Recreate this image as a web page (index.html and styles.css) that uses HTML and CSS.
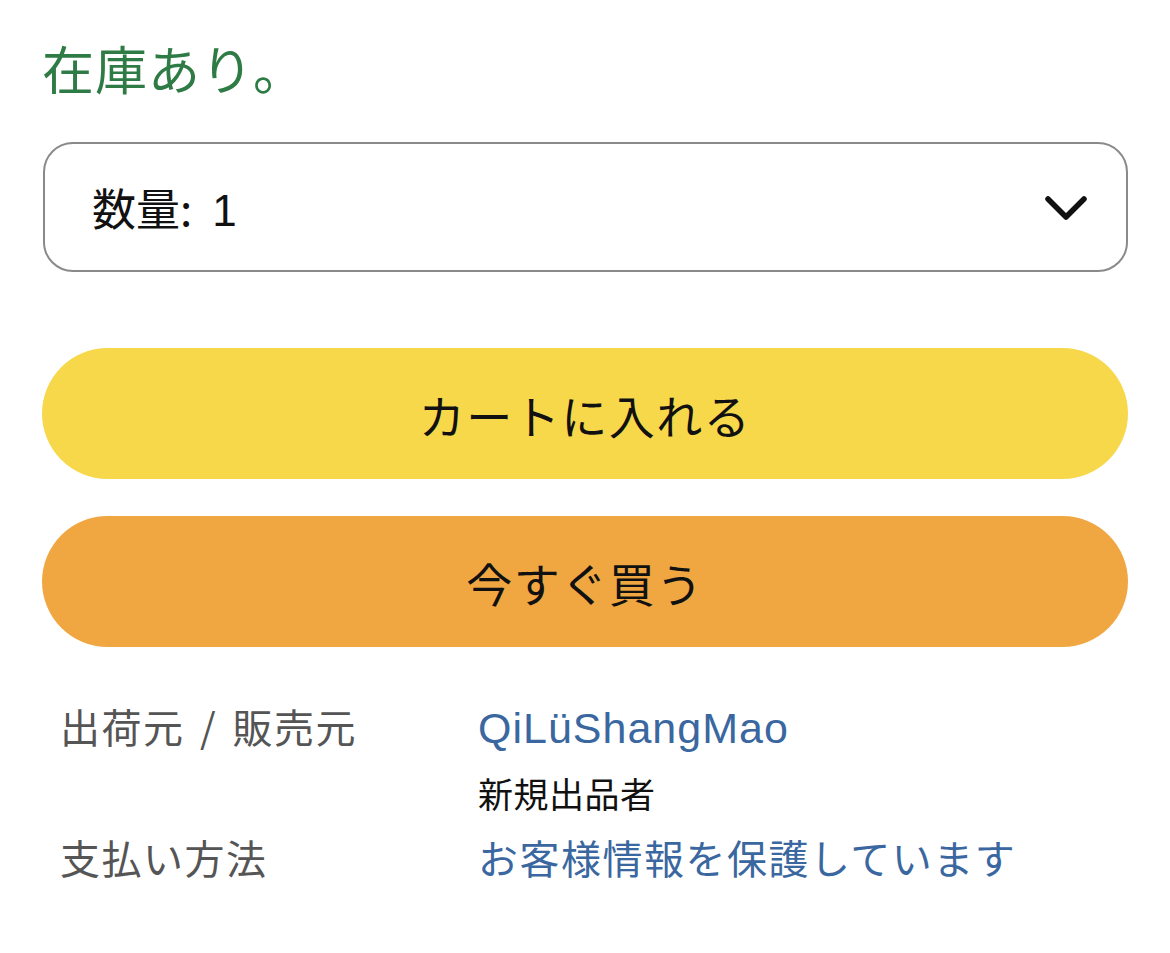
FILE: index.html
```html
<!DOCTYPE html>
<html lang="ja">
<head>
    <meta charset="utf-8">
    <title>在庫あり</title>
    <link rel="stylesheet" href="styles.css">
</head>
<body>
    <div class="buybox">
        <p class="stock">在庫あり。</p>
        <div class="qty">
            <span class="qty-label">数量:<span class="qty-num">1</span></span>
            <svg class="chevron" width="44" height="30" viewBox="0 0 44 30">
                <path d="M4 6 L22 24 L40 6" fill="none" stroke="#111" stroke-width="5.5" stroke-linecap="round" stroke-linejoin="round"/>
            </svg>
        </div>
        <button class="btn btn-cart">カートに入れる</button>
        <button class="btn btn-buy">今すぐ買う</button>
        <div class="info">
            <div class="info-label">出荷元 / 販売元</div>
            <div class="info-value">
                <a class="link seller">QiLüShangMao</a>
                <div class="sub">新規出品者</div>
            </div>
            <div class="info-label">支払い方法</div>
            <div class="info-value">
                <a class="link">お客様情報を保護しています</a>
            </div>
        </div>
    </div>
</body>
</html>
```

FILE: styles.css
```css
* { box-sizing: border-box; }
html, body { margin: 0; padding: 0; background: #fff; }
body { font-family: "Noto Sans CJK JP", "Noto Sans", sans-serif; color: #111; }

.buybox { width: 1170px; padding: 0 42px; display: flex; flex-direction: column; }

.stock { margin: 30px 0 0 0; font-size: 52px; line-height: 76px; letter-spacing: 1px; color: #2f7b45; }

.qty { margin: 36px 0 0 1px; height: 130px; border: 2.5px solid #8a8a8a; border-radius: 30px;
    display: flex; align-items: center; justify-content: space-between; padding: 0 38px 0 47px; }
.qty-label { font-size: 44px; }
.qty-num { margin-left: 20px; font-family: "Liberation Sans", sans-serif; font-weight: 300; }
.chevron { display: block; margin-top: 2px; }

.btn { border: 0; width: 1086px; height: 131px; border-radius: 66px; font-family: inherit;
    font-size: 46px; letter-spacing: 1.5px; color: #111; padding: 0; }
.btn-cart { margin-top: 76px; background: #f7d84b; }
.btn-buy { margin-top: 37px; background: #f0a742; }

.info { margin-top: 49px; padding-left: 18px; display: grid; grid-template-columns: 418px 1fr;
    row-gap: 6px; font-size: 40px; line-height: 60px; letter-spacing: 1.5px; }
.info-label { color: #555; word-spacing: 5px; }
.link { color: #3a679f; text-decoration: none; }
.seller { font-family: "Liberation Sans", sans-serif; font-size: 43px; letter-spacing: 1px; }
.sub { margin-top: 7px; font-size: 35px; line-height: 56px; letter-spacing: 0.5px; color: #111; }
```
